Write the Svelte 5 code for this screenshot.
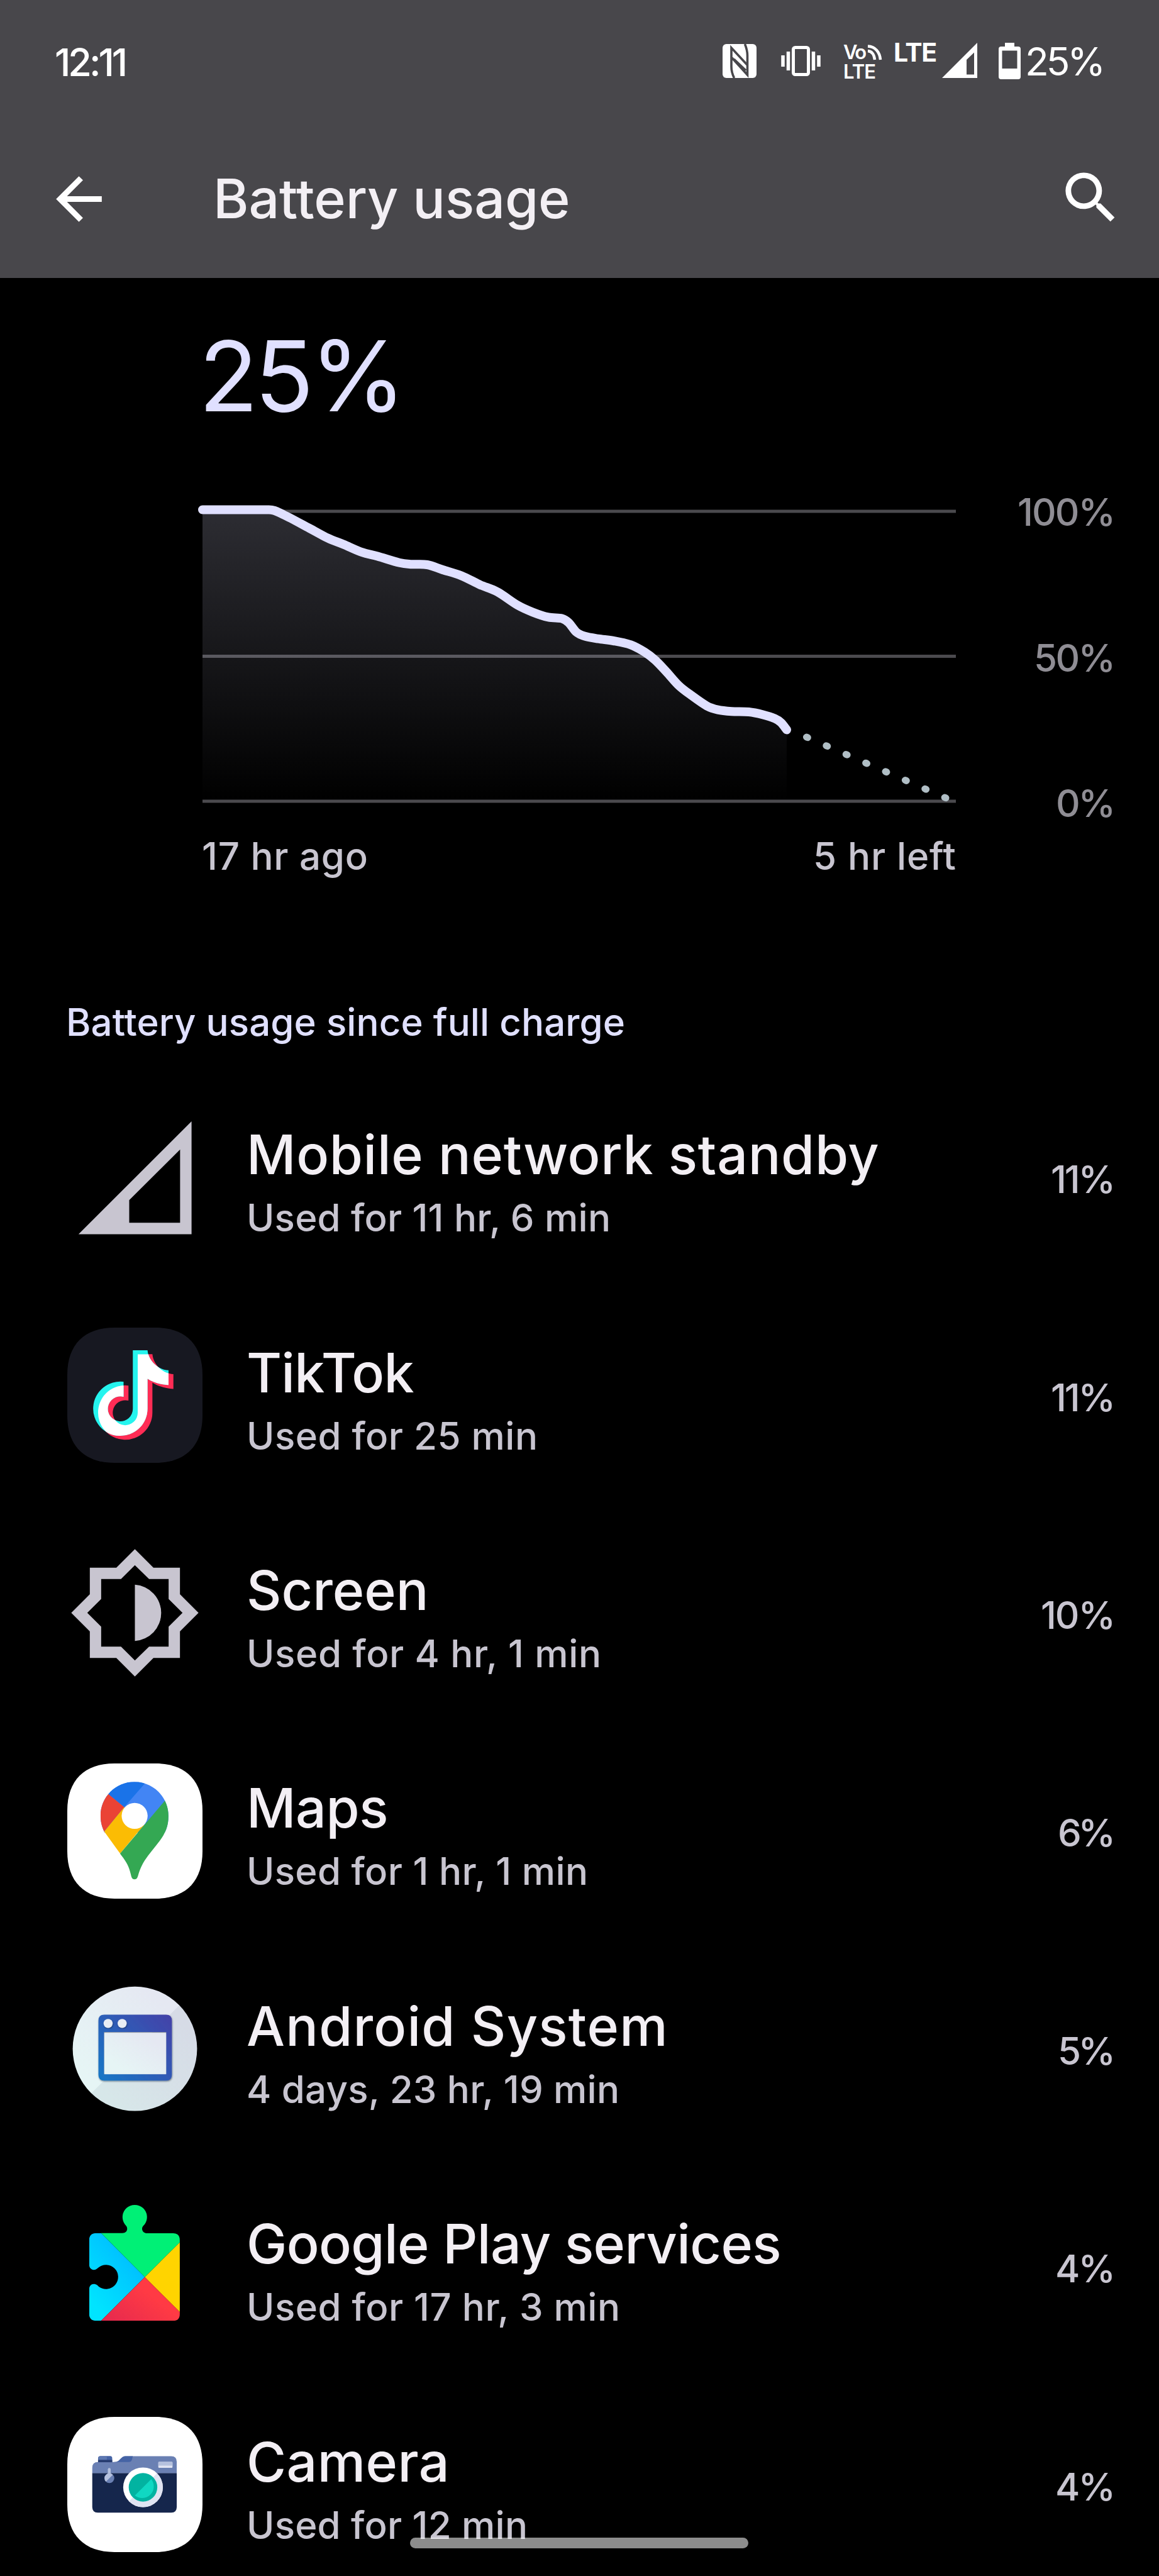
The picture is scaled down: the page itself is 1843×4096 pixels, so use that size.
<script lang="ts">
  type Usage = {
    icon: string;
    name: string;
    nameWidth: number;
    detail: string;
    detailWidth: number;
    percent: number;
    percentWidth: number;
  };

  const usage: Usage[] = [
    { icon: 'signal', name: 'Mobile network standby', nameWidth: 997, detail: 'Used for 11 hr, 6 min', detailWidth: 573, percent: 11, percentWidth: 97 },
    { icon: 'tiktok', name: 'TikTok', nameWidth: 258, detail: 'Used for 25 min', detailWidth: 457, percent: 11, percentWidth: 97 },
    { icon: 'screen', name: 'Screen', nameWidth: 281, detail: 'Used for 4 hr, 1 min', detailWidth: 558, percent: 10, percentWidth: 113 },
    { icon: 'maps', name: 'Maps', nameWidth: 217, detail: 'Used for 1 hr, 1 min', detailWidth: 537, percent: 6, percentWidth: 86 },
    { icon: 'android', name: 'Android System', nameWidth: 661, detail: '4 days, 23 hr, 19 min', detailWidth: 587, percent: 5, percentWidth: 86 },
    { icon: 'play', name: 'Google Play services', nameWidth: 842, detail: 'Used for 17 hr, 3 min', detailWidth: 588, percent: 4, percentWidth: 90 },
    { icon: 'camera', name: 'Camera', nameWidth: 314, detail: 'Used for 12 min', detailWidth: 441, percent: 4, percentWidth: 90 }
  ];

  const levels = [
    { label: '100%', width: 150 },
    { label: '50%', width: 124 },
    { label: '0%', width: 89 }
  ];

  // Battery history, in chart units (1198 x 461)
  const history: [number, number][] = [
    [0, -2.5], [105.6, -2.5], [130, 6], [170, 27], [199.4, 42.7], [224, 52.5], [253.7, 65.2],
    [278.4, 71.5], [313, 81.7], [332.7, 84.2], [357.4, 85], [382, 93], [411.7, 102.4],
    [441.3, 116.8], [469, 128.2], [500.6, 149], [525.2, 160.4], [550, 168.4], [571.6, 170.5],
    [582.5, 177.3], [594.4, 192], [607.2, 198.4], [629, 202.7], [653.6, 206], [681.2, 212.4],
    [703, 223.8], [719.7, 236.5], [737.5, 255], [757.3, 277], [777, 292.4], [801.7, 309.3],
    [819.5, 315.6], [841.2, 318.2], [868.8, 319], [890.5, 323.2], [910.3, 329.6], [920, 336],
    [929, 347.4]
  ];

  function smooth(points: [number, number][]) {
    let d = `M${points[0][0]},${points[0][1]} H${points[1][0]}`;
    for (let i = 1; i < points.length - 1; i++) {
      const p0 = points[i - 1];
      const p1 = points[i];
      const p2 = points[i + 1];
      const p3 = points[i + 2] || p2;
      // leave the flat start horizontally
      if (i === 1) {
        d += ` C${p1[0] + 10},${p1[1]}`;
      } else {
        d += ` C${p1[0] + (p2[0] - p0[0]) / 6},${p1[1] + (p2[1] - p0[1]) / 6}`;
      }
      d += ` ${p2[0] - (p3[0] - p1[0]) / 6},${p2[1] - (p3[1] - p1[1]) / 6} ${p2[0]},${p2[1]}`;
    }
    return d;
  }

  const line = smooth(history);
  const area = `${line} V461 H0 Z`;

  // Tracks a label so that its glyphs span the given width
  function span(node: HTMLElement, width: number) {
    const size = parseFloat(getComputedStyle(node).fontSize);
    const natural = node.getBoundingClientRect().width;
    const gaps = (node.textContent || '').length - 1;
    const spacing = (width + size * 0.1 - natural) / gaps;
    node.style.letterSpacing = `${spacing}px`;
    node.style.marginRight = `${-spacing}px`;
  }
</script>

<div class="screen">
  <header>
    <div class="status-bar">
      <span class="clock"><span class="label" use:span={110}>12:11</span></span>
      <div class="status-icons">
        <svg class="nfc" width="54" height="54" viewBox="0 0 54 54">
          <rect width="54" height="54" rx="6" fill="#fff" />
          <path d="M18.500 54Q14 45 14 36V6L39 33M35.500 0Q39.500 10 39.500 18V49L15 22M18 24L37 42" fill="none" stroke="#48474b" stroke-width="3.600" />
        </svg>
        <svg class="vibrate" width="63" height="48" viewBox="0 0 63 48">
          <rect x="19.500" y="2.500" width="24" height="43" rx="3" fill="none" stroke="#fff" stroke-width="5" />
          <path d="M3 15v18M11.500 9v30M51.500 9v30M60 15v18" stroke="#fff" stroke-width="5.500" />
        </svg>
        <div class="volte">
          <div class="vo">
            <span class="label" use:span={34}>Vo</span>
            <svg width="24" height="26" viewBox="0 0 24 26">
              <path d="M1 3.500C13 4 20 13 21 25M1 11C8 11.500 11 17 12 25" fill="none" stroke="#fff" stroke-width="4.500" />
            </svg>
          </div>
          <div class="lte-small"><span class="label" use:span={49}>LTE</span></div>
        </div>
        <div class="lte"><span class="label" use:span={65}>LTE</span></div>
        <svg class="cell" width="56" height="56" viewBox="0 0 56 56">
          <path fill="#fff" fill-rule="evenodd" d="M56 0V56H0zM51 15.500L39 27V50.500H51z" />
        </svg>
        <svg class="battery" width="35" height="58" viewBox="0 0 35 58">
          <path fill="#fff" fill-rule="evenodd" d="M10 0H25V6H31Q35 6 35 10V54Q35 58 31 58H4Q0 58 0 54V10Q0 6 4 6H10zM5.500 12.500V41H29.500V12.500z" />
        </svg>
        <div class="charge"><span class="label" use:span={122}>25%</span></div>
      </div>
    </div>
    <div class="app-bar">
      <svg class="back" width="109" height="109" viewBox="0 0 24 24">
        <path fill="#fff" d="M20 11H7.830l5.590-5.590L12 4l-8 8 8 8 1.410-1.410L7.830 13H20v-2z" />
      </svg>
      <h1><span class="label" use:span={559}>Battery usage</span></h1>
      <svg class="search" width="107" height="107" viewBox="0 0 24 24">
        <path fill="#fff" d="M15.500 14h-.79l-.28-.27A6.471 6.471 0 0 0 16 9.500 6.500 6.500 0 1 0 9.500 16c1.610 0 3.090-.59 4.230-1.570l.27.28v.79l5 4.990L20.490 19l-4.990-5zm-6 0C7.010 14 5 11.990 5 9.500S7.010 5 9.500 5 14 7.010 14 9.500 11.990 14 9.500 14z" />
      </svg>
    </div>
  </header>

  <main>
    <div class="level"><span class="label" use:span={314}>25%</span></div>

    <div class="chart">
      <svg class="plot" width="1198" height="461" viewBox="0 0 1198 461">
        <defs>
          <linearGradient id="fade" x1="0" y1="0" x2="0" y2="1">
            <stop offset="0" stop-color="#e0e0ff" stop-opacity="0.2" />
            <stop offset="1" stop-color="#e0e0ff" stop-opacity="0" />
          </linearGradient>
        </defs>
        <path d="M0 0H1198M0 230.500H1198M0 461H1198" stroke="#4b4a4e" stroke-width="5" />
        <path d={area} fill="url(#fade)" />
        <path d={line} fill="none" stroke="#e0e0ff" stroke-width="14" stroke-linecap="round" stroke-linejoin="round" />
        <path d="M960.500 359L1182 455.800" stroke="#b0bec5" stroke-width="11" stroke-linecap="round" stroke-dasharray="2 32.250" />
      </svg>
      <div class="levels">
        {#each levels as level}
          <span class="label" use:span={level.width}>{level.label}</span>
        {/each}
      </div>
    </div>
    <div class="times">
      <span class="label" use:span={258}>17 hr ago</span>
      <span class="label" use:span={221}>5 hr left</span>
    </div>

    <h2><span class="label" use:span={883}>Battery usage since full charge</span></h2>

    <ul>
      {#each usage as app}
        <li>
          {#if app.icon === 'signal'}
            <svg class="icon" viewBox="103 36 1050 1050">
              <path fill="#c8c5d0" fill-rule="evenodd" d="M1068 124V1000H190zM979 342L584 736V912H979z" />
            </svg>
          {:else if app.icon === 'tiktok'}
            <svg class="icon" viewBox="103 108 1050 1050">
              <defs>
                <path id="note" d="M650 314H764C770 390 840 465 927 469V584C870 582 805 562 764 535V768A211 211 0 1 1 578 558V675A97 97 0 1 0 650 768z" />
                <clipPath id="note-clip"><use href="#note" /></clipPath>
              </defs>
              <path fill="#171821" d="M470 108H786C1021 108 1153 240 1153 475V791C1153 1026 1021 1158 786 1158H470C235 1158 103 1026 103 791V475C103 240 235 108 470 108z" />
              <use href="#note" fill="#ff2c55" />
              <use href="#note" fill="#25f4ee" transform="translate(-38 -30)" />
              <g clip-path="url(#note-clip)">
                <use href="#note" fill="#fff" transform="translate(-38 -30)" />
              </g>
            </svg>
          {:else if app.icon === 'screen'}
            <svg class="icon" viewBox="103 121 1050 1050">
              <path fill="#c8c5d0" fill-rule="evenodd" d="M628 152L772 296H978V502L1122 646L978 790V996H772L628 1141L484 996H278V790L134 646L278 502V296H484zM628 276L520 384H366V538L258 646L366 754V908H520L628 1016L738 908H890V754L998 646L890 538V384H738z" />
              <path fill="#c8c5d0" d="M628 428A219 219 0 0 1 628 865z" />
            </svg>
          {:else if app.icon === 'maps'}
            <svg class="icon" viewBox="103 103 1050 1050">
              <defs>
                <clipPath id="pin">
                  <path d="M625 246C771 246 889 364 889 512C889 590 862 650 820 705C780 760 737 805 705 855C670 910 660 950 651 980Q643 1004 625 1004Q607 1004 600 980C592 940 578 895 555 862C535 830 510 800 480 762C430 700 361 625 361 510C361 364 479 246 625 246z" />
                </clipPath>
              </defs>
              <path fill="#fff" d="M470 103H786C1021 103 1153 235 1153 470V786C1153 1021 1021 1153 786 1153H470C235 1153 103 1021 103 786V470C103 235 235 103 470 103z" />
              <g clip-path="url(#pin)">
                <path fill="#4285f4" d="M300 200H950V640H300z" />
                <path fill="#1a73e8" d="M713 250L545 443L425 344L340 275L400 150H760z" />
                <path fill="#ea4335" d="M425 344L545 443L390 632L300 740V240z" />
                <path fill="#fbbc04" d="M545 443L625 515L700 583L640 650L513 803L390 632z" />
                <path fill="#34a853" d="M860 393L513 803L600 1100H1000V230z" />
              </g>
              <circle cx="626" cy="510" r="101" fill="#fff" />
            </svg>
          {:else if app.icon === 'android'}
            <svg class="icon" viewBox="103 84 1050 1050">
              <defs>
                <linearGradient id="disc" x1="0.2" y1="0.8" x2="0.8" y2="0.2">
                  <stop offset="0" stop-color="#e6f5f5" />
                  <stop offset="1" stop-color="#e5e8f2" />
                </linearGradient>
                <linearGradient id="frame" x1="0" y1="0.9" x2="1" y2="0.1">
                  <stop offset="0" stop-color="#1976c5" />
                  <stop offset="1" stop-color="#4343a9" />
                </linearGradient>
                <clipPath id="disc-clip"><circle cx="628" cy="610" r="483" /></clipPath>
                <filter id="drop" x="-10%" y="-10%" width="120%" height="120%">
                  <feDropShadow dx="3" dy="6" stdDeviation="5" flood-color="#123" flood-opacity="0.55" />
                </filter>
              </defs>
              <circle cx="628" cy="610" r="483" fill="url(#disc)" />
              <path clip-path="url(#disc-clip)" fill="#5a7080" fill-opacity="0.1" d="M1160 85L100 1145H1160z" />
              <path filter="url(#drop)" fill="url(#frame)" fill-rule="evenodd" d="M390 345H870Q915 345 915 390V812Q915 857 870 857H390Q345 857 345 812V390Q345 345 390 345zM388 480V808H872V480z" />
              <path fill="url(#disc)" d="M391 486H869V805H391z" />
              <g filter="url(#drop)" fill="#e9eef5">
                <circle cx="420" cy="413" r="35" />
                <circle cx="529" cy="413" r="35" />
              </g>
            </svg>
          {:else if app.icon === 'play'}
            <svg class="icon" viewBox="103 96 1050 1050">
              <defs>
                <linearGradient id="blue" x1="0.7" y1="0.2" x2="0.2" y2="0.9">
                  <stop offset="0" stop-color="#00bfff" />
                  <stop offset="1" stop-color="#00e4ff" />
                </linearGradient>
                <linearGradient id="red" x1="1" y1="0.3" x2="0" y2="1">
                  <stop offset="0.3" stop-color="#ff3a44" />
                  <stop offset="1" stop-color="#e4284f" />
                </linearGradient>
                <clipPath id="puzzle">
                  <path d="M330 358H530C555 358 568 342 568 325C568 306 558 301 550 290A95 95 0 1 1 704 290C696 301 684 308 684 325C684 342 698 360 725 360H925Q977 360 977 415V985Q977 1040 925 1040H330Q273 1040 273 985V795C273 770 289 754 308 754C330 754 338 765 350 776A94 94 0 1 0 342 628C331 637 325 644 308 644C289 644 273 628 273 603V413Q273 358 330 358z" />
                </clipPath>
              </defs>
              <g clip-path="url(#puzzle)">
                <path fill="#00f076" d="M273 100H977V430L705 700L365 358z" />
                <path fill="url(#blue)" d="M273 358H365L705 700L365 1040H273z" />
                <path fill="#ffd400" d="M977 430V972L705 700z" />
                <path fill="url(#red)" d="M705 700L977 972V1040H365z" />
              </g>
            </svg>
          {:else}
            <svg class="icon" viewBox="103 108 1050 1050">
              <path fill="#fff" d="M470 108H786C1021 108 1153 240 1153 475V791C1153 1026 1021 1158 786 1158H470C235 1158 103 1026 103 791V475C103 240 235 108 470 108z" />
              <path fill="#6a80b3" d="M297 546V502Q297 458 342 458H460C495 458 502 448 515 435C530 420 540 413 555 413H910Q953 413 953 456V546z" />
              <path fill="#4563a5" d="M515 435C530 420 540 413 555 413H612C605 436 608 458 580 458H480C500 455 505 446 515 435z" />
              <path fill="#15264c" d="M297 545H953V808Q953 852 910 852H340Q297 852 297 808z" />
              <path fill="#4563a5" d="M342 460V430Q342 412 360 412H436Q452 412 452 430V460z" />
              <path fill="#5d78b1" d="M345 442V430Q345 415 360 415H410V442z" />
              <path fill="#273c70" d="M342 442H452V460H342z" />
              <path fill="#b5c1de" d="M418 516Q418 505 429 505Q440 505 440 516V560H418z" />
              <circle cx="430" cy="584" r="38" fill="#6a80b3" />
              <path fill="#b5c1de" d="M403 611A38 38 0 0 1 457 557z" />
              <rect x="810" y="457" width="110" height="46" rx="6" fill="#e0e4f2" />
              <path fill="#b5c1de" d="M810 486V463Q810 457 816 457H914Q920 457 920 463V486z" />
              <circle cx="691" cy="655" r="154" fill="#fff" />
              <path fill="#e0e4f2" d="M800 546A154 154 0 0 1 582 764z" />
              <circle cx="691" cy="655" r="111" fill="#02b3a1" />
              <path fill="#10d8c3" d="M755 592A90 90 0 0 1 628 718z" />
            </svg>
          {/if}
          <div class="text">
            <div class="name"><span class="label" use:span={app.nameWidth}>{app.name}</span></div>
            <div class="detail"><span class="label" use:span={app.detailWidth}>{app.detail}</span></div>
          </div>
          <div class="percent"><span class="label" use:span={app.percentWidth}>{app.percent}%</span></div>
        </li>
      {/each}
    </ul>
  </main>

  <div class="nav-handle"></div>
</div>

<style>
  :global(body) {
    margin: 0;
    background: #000;
  }

  .screen {
    position: relative;
    width: 1843px;
    height: 4096px;
    overflow: hidden;
    background: #000;
    color: #f3eff4;
    font-family: Inter, 'Open Sans', sans-serif;
    font-weight: 500;
    font-size: 60px;
    line-height: 60px;
    font-kerning: normal;
  }

  .label {
    display: inline-block;
    white-space: pre;
  }

  header {
    height: 442px;
    background: #48474b;
  }

  .status-bar {
    display: flex;
    justify-content: space-between;
    box-sizing: border-box;
    height: 196px;
    padding: 66px 84px 0 87px;
    color: #fff;
  }

  .clock {
    height: 62px;
    margin-top: 2px;
    font-size: 61px;
    line-height: 62px;
  }

  .status-icons {
    display: flex;
    align-items: flex-start;
  }

  .nfc {
    margin-top: 4px;
  }

  .vibrate {
    margin: 7px 0 0 39px;
  }

  .volte {
    width: 62px;
    margin: 1px 0 0 36px;
    font-weight: 600;
    font-size: 31px;
    line-height: 31px;
  }

  .vo {
    display: flex;
    gap: 1px;
    height: 31px;
  }

  .vo svg {
    flex-shrink: 0;
    margin-top: 3px;
  }

  .lte {
    width: 66px;
    margin: 2px 0 0 18px;
    font-weight: 700;
    font-size: 41px;
    line-height: 30px;
  }

  .cell {
    margin: 2px 0 0 11px;
  }

  .battery {
    margin: 2px 0 0 34px;
  }

  .charge {
    width: 129px;
    margin: 1px 0 0 7px;
    font-weight: 400;
    font-size: 62px;
    line-height: 62px;
  }

  .app-bar {
    display: flex;
    align-items: center;
    height: 240px;
    padding: 0 55px 0 71px;
  }

  h1 {
    flex: 1;
    margin: 0 0 0 159px;
    font-weight: 500;
    font-size: 86px;
    line-height: 86px;
  }

  .search {
    margin-top: -4px;
  }

  .level {
    height: 155px;
    padding: 78px 0 0 316px;
    color: #e0e0ff;
    font-weight: 400;
    font-size: 155px;
    line-height: 155px;
  }

  .chart {
    display: flex;
    justify-content: space-between;
    height: 461px;
    margin-top: 138px;
    padding: 0 69px 0 322px;
  }

  .plot {
    overflow: visible;
  }

  .levels {
    display: flex;
    flex-direction: column;
    align-items: flex-end;
    justify-content: space-between;
    height: 523px;
    margin-top: -29px;
    color: #8f8d94;
  }

  .times {
    display: flex;
    justify-content: space-between;
    width: 1199px;
    margin: 57px 0 0 321px;
    color: #c8c5d0;
  }

  h2 {
    margin: 204px 0 44px 105px;
    color: #e0e0ff;
    font-weight: 500;
    font-size: 60px;
    line-height: 60px;
  }

  ul {
    margin: 0;
    padding: 0;
    list-style: none;
  }

  li {
    display: flex;
    align-items: center;
    height: 346.4px;
    padding: 0 69px 0 107px;
  }

  .icon {
    flex-shrink: 0;
    width: 215px;
    height: 215px;
  }

  .text {
    flex: 1;
    margin-left: 70px;
    padding-top: 15px;
  }

  .name {
    font-size: 86px;
    line-height: 86px;
  }

  .detail {
    margin-top: 27px;
    color: #c8c5d0;
  }

  .percent {
    padding-top: 6px;
    color: #c8c5d0;
  }

  .nav-handle {
    position: absolute;
    bottom: 44px;
    left: 652px;
    width: 538px;
    height: 17px;
    border-radius: 9px;
    background: rgba(255, 255, 255, 0.55);
  }
</style>
